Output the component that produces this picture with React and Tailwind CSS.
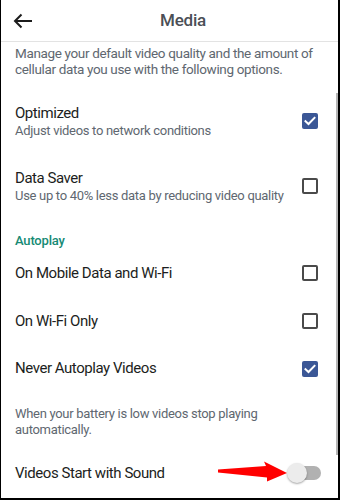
import React from "react";

function Checkbox({ checked }) {
  if (checked) {
    return (
      <div className="w-[16px] h-[16px] rounded-[2px] bg-[#3b5796] flex items-center justify-center shrink-0">
        <svg width="12" height="10" viewBox="0 0 12 10">
          <path d="M1.5 5.2 L4.5 8 L10.5 1.8" fill="none" stroke="white" strokeWidth="2" strokeLinecap="square" />
        </svg>
      </div>
    );
  }
  return <div className="w-[16px] h-[16px] rounded-[2px] border-2 border-[#4a4a4a] shrink-0" />;
}

export default function App() {
  return (
    <div
      className="relative w-[340px] h-[500px] bg-white border-l border-r-2 border-b-2 border-black overflow-hidden"
      style={{ fontFamily: "Roboto, 'Liberation Sans', sans-serif" }}
    >
      <div className="h-[42px] border-b border-[#e3e3e3] flex items-center">
        <div className="pl-[12px] w-[31px] flex items-center">
          <svg width="20" height="16" viewBox="0 0 20 16" className="shrink-0">
            <path d="M19 8 H2.5 M8.5 1.5 L2 8 L8.5 14.5" fill="none" stroke="#1c1c1c" strokeWidth="2" />
          </svg>
        </div>
        <div className="flex-1 text-center pr-[4px] text-[17px] tracking-[-0.2px] font-medium text-[#4b4f56]">Media</div>
      </div>

      <div className="pl-[14px] pr-[20px]">
        <p className="pt-[3px] text-[13.5px] tracking-[-0.35px] leading-[16px] text-[#606770]">
          Manage your default video quality and the amount of cellular data you use with the following options.
        </p>

        <div className="mt-[26px] flex items-center">
          <div className="flex-1">
            <div className="text-[15px] tracking-[-0.45px] leading-[20px] text-[#1c1e21]">Optimized</div>
            <div className="text-[13px] tracking-[-0.3px] leading-[16px] text-[#606770]">Adjust videos to network conditions</div>
          </div>
          <Checkbox checked />
        </div>

        <div className="mt-[29px] flex items-center">
          <div className="flex-1">
            <div className="text-[15px] tracking-[-0.45px] leading-[20px] text-[#1c1e21]">Data Saver</div>
            <div className="text-[13px] tracking-[-0.3px] leading-[15px] text-[#606770]">Use up to 40% less data by reducing video quality</div>
          </div>
          <Checkbox />
        </div>

        <div className="mt-[30px] text-[13px] tracking-[-0.2px] leading-[16px] font-medium text-[#168a74]">Autoplay</div>

        <div className="h-[48px] flex items-center">
          <div className="flex-1 text-[15px] tracking-[-0.45px] text-[#1c1e21]">On Mobile Data and Wi-Fi</div>
          <Checkbox />
        </div>
        <div className="h-[48px] flex items-center">
          <div className="flex-1 text-[15px] tracking-[-0.45px] text-[#1c1e21]">On Wi-Fi Only</div>
          <Checkbox />
        </div>
        <div className="h-[47px] flex items-center">
          <div className="flex-1 text-[15px] tracking-[-0.45px] text-[#1c1e21]">Never Autoplay Videos</div>
          <Checkbox checked />
        </div>

        <p className="mt-[14px] text-[13px] tracking-[-0.3px] leading-[16px] text-[#606770]">
          When your battery is low videos stop playing
          <br />
          automatically.
        </p>

        <div className="mt-[11px] h-[48px] flex items-center">
          <div className="flex-1 text-[15px] tracking-[-0.45px] text-[#1c1e21]">Videos Start with Sound</div>
          <div className="relative w-[34px] h-[20px] mr-[-3px] flex items-center">
            <div className="absolute left-[5px] right-0 h-[14px] rounded-full bg-[#b1b1b1]" />
            <div className="absolute left-0 w-[20px] h-[20px] rounded-full bg-[#ececec] shadow-[0_1px_2px_rgba(0,0,0,0.35)]" />
          </div>
        </div>
      </div>

      <div className="absolute right-0 top-[93px] w-[2px] h-[362px] bg-[#b5b5b5]" />

      <svg className="absolute left-0 top-0 pointer-events-none" width="340" height="500" viewBox="0 0 340 500">
        <polygon points="217,469.5 265,466 263,461.5 286,473 266,481.5 266,477.5 217,472.5" fill="#f00" />
      </svg>
    </div>
  );
}
